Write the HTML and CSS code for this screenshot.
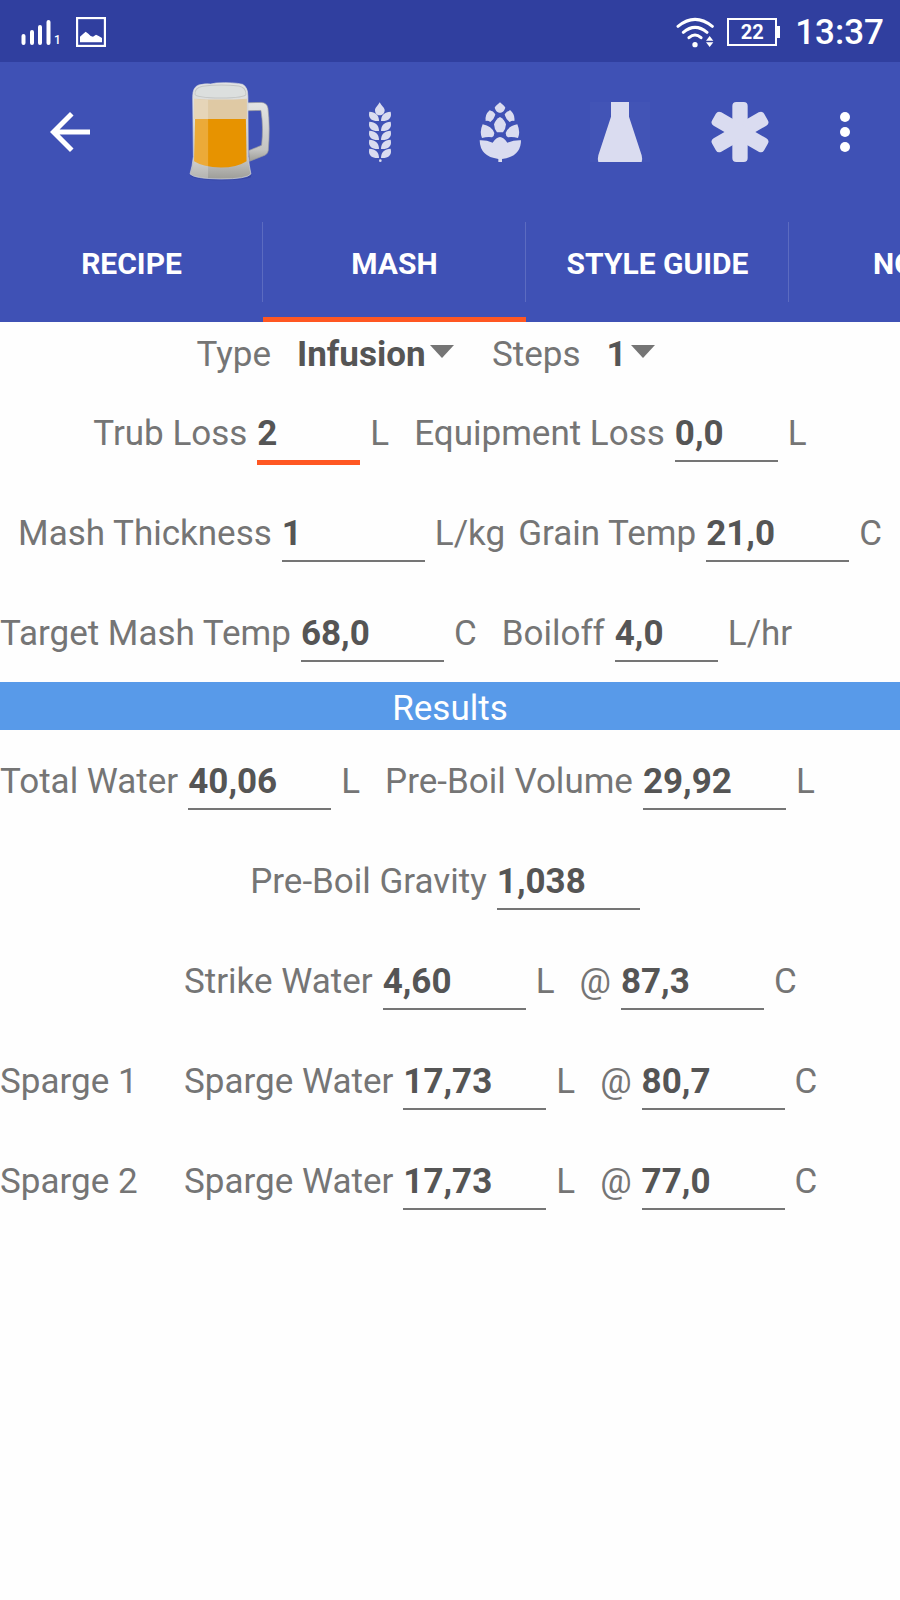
FILE: index.html
```html
<!DOCTYPE html>
<html lang="en">
<head>
    <meta charset="UTF-8">
    <meta name="viewport" content="width=device-width, initial-scale=1.0">
    <title>Mash</title>
    <link rel="stylesheet" href="styles.css">
</head>
<body>
    <div class="status-bar">
        <div class="status-group">
            <div class="signal">
                <svg width="30" height="25" viewBox="0 0 30 25" stroke="#fff" stroke-width="4" stroke-linecap="round">
                    <path d="M2.500 16v7M11 12v11M19 7v16M27.500 2v21"/>
                </svg>
                <span class="sim">1</span>
            </div>
            <svg width="30" height="30" viewBox="0 0 90 90">
                <rect x="3" y="3" width="84" height="84" fill="none" stroke="#fff" stroke-width="7"/>
                <path d="M12 76V59L22 50L29 44L37 50L44 57L51 59L60 53L68 57L78 63V76Z" fill="#fff"/>
            </svg>
        </div>
        <div class="status-group status-right">
            <svg width="39" height="31" viewBox="0 0 117 93" fill="none" stroke="#fff" stroke-width="9" stroke-linecap="round">
                <path d="M6 28Q57 -14 109 28M22 46Q57 16 93 46M39 62Q57 46 75 62"/>
                <circle cx="57" cy="83" r="8" fill="#fff" stroke="none"/>
                <path d="M101 57L112 71H90ZM101 90L112 76H90Z" fill="#fff" stroke="none"/>
            </svg>
            <div class="battery"><span>22</span></div>
            <span class="clock">13:37</span>
        </div>
    </div>

    <header class="app-bar">
        <button class="back-btn" aria-label="Back">
            <svg width="60" height="60" viewBox="0 0 24 24" fill="#fff"><path d="M20 11H7.830l5.590-5.590L12 4l-8 8 8 8 1.410-1.410L7.830 13H20z"/></svg>
        </button>
        <button class="mug-btn" aria-label="Brew">
            <svg width="87" height="102" viewBox="561 244 260 305">
                <defs>
                    <linearGradient id="glass" x1="0" y1="0" x2="0" y2="1">
                        <stop offset="0" stop-color="#e3e4e4"/>
                        <stop offset=".8" stop-color="#c4c4c2"/>
                        <stop offset="1" stop-color="#9d9d98"/>
                    </linearGradient>
                </defs>
                <path d="M572 524Q580 538 662 539Q744 538 753 524L752 532Q730 541 662 541Q590 540 572 529Z" fill="#2c3a8c" opacity=".5"/>
                <path d="M742 309L783 308Q800 309 803 325Q810 380 804 452Q803 462 794 466L748 484L746 452L784 436Q790 380 782 332L742 333Z" fill="url(#glass)" stroke="#9a9b9d" stroke-width="2"/>
                <path d="M578 290Q578 262 596 256Q615 251 632 253L648 250Q700 247 727 254Q743 262 743 290L744 470Q746 495 752 522Q740 537 662 537Q582 536 570 522Q577 500 580 470Z" fill="url(#glass)" stroke="#d5d6dd" stroke-width="2"/>
                <path d="M585 284Q583 265 607 260Q660 252 716 259Q738 264 737 284Q735 294 662 295Q588 294 585 284Z" fill="#dcdfde" stroke="#c3c5c4" stroke-width="3"/>
                <path d="M582 297Q660 302 740 297V358H582Z" fill="#dfc9a4"/>
                <path d="M585 358H737L739 484Q710 503 662 503Q610 502 582 484Z" fill="#e79300"/>
                <path d="M580 296Q600 300 624 300V534Q586 532 572 522Q580 500 582 470Z" fill="#fff" opacity=".22"/>
            </svg>
        </button>
        <nav class="actions">
            <button aria-label="Grains">
                <svg width="60" height="60" viewBox="0 0 180 180" fill="#dadcf0">
                    <defs>
                        <path id="grain" d="M-32 1C-14 2 -3 10 -3 29C-22 31 -34 22 -33 8Z"/>
                        <g id="pair"><use href="#grain"/><use href="#grain" transform="scale(-1 1)"/></g>
                    </defs>
                    <path d="M89 1C95 12 104 17 104 25C104 34 97 40 89 40C81 40 75 34 75 25C75 17 83 12 89 1Z"/>
                    <use href="#pair" x="90" y="28"/>
                    <use href="#pair" x="90" y="58"/>
                    <use href="#pair" x="90" y="85"/>
                    <use href="#pair" x="90" y="112"/>
                    <use href="#pair" x="90" y="139"/>
                    <circle cx="91" cy="176" r="4"/>
                </svg>
            </button>
            <button aria-label="Hops">
                <svg width="60" height="60" viewBox="0 0 180 180" fill="#dadcf0">
                    <path d="M90 1C97 7 103 11 106 17C104 24 100 29 96 31Q90 34 84 31C80 29 76 24 74 17C77 11 83 7 90 1Z"/>
                    <path id="hop-upper" d="M59 25Q70 27 76 37Q73 51 61 60Q54 55 47 57Q44 38 59 25Z"/>
                    <use href="#hop-upper" transform="matrix(-1 0 0 1 180 0)"/>
                    <path d="M90 45Q103 52 108 67Q107 82 99 91H81Q73 82 72 67Q77 52 90 45Z"/>
                    <path id="hop-lower" d="M38 67Q65 72 73 93Q73 102 66 106Q52 104 36 108Q28 90 38 67Z"/>
                    <use href="#hop-lower" transform="matrix(-1 0 0 1 180 0)"/>
                    <path d="M29 115Q49 114 68 122Q79 106 90 105Q101 106 112 122Q131 114 153 115Q153 164 96 171V180H85V171Q30 164 29 115Z"/>
                </svg>
            </button>
            <button aria-label="Yeast">
                <svg width="60" height="60" viewBox="0 0 180 180" fill="#dadcf0">
                    <rect width="180" height="180" fill="#fff" opacity=".02"/>
                    <path d="M63 0H117V44L155 160Q158 172 155 180H25Q22 172 25 160L63 44Z"/>
                </svg>
            </button>
            <button aria-label="Other ingredients">
                <svg width="60" height="60" viewBox="0 0 180 180" fill="#dadcf0">
                    <rect id="arm" x="67" y="0" width="46" height="180" rx="12"/>
                    <use href="#arm" transform="rotate(60 90 90)"/>
                    <use href="#arm" transform="rotate(120 90 90)"/>
                </svg>
            </button>
            <button class="menu-btn" aria-label="More options">
                <svg width="60" height="60" viewBox="0 0 60 60" fill="#fff">
                    <circle cx="30" cy="15" r="5"/><circle cx="30" cy="30" r="5"/><circle cx="30" cy="45" r="5"/>
                </svg>
            </button>
        </nav>
    </header>

    <nav class="tabs">
        <button class="tab">RECIPE</button>
        <button class="tab active">MASH</button>
        <button class="tab">STYLE GUIDE</button>
        <button class="tab">NOTES</button>
    </nav>

    <main>
        <form class="mash-form">
            <div class="type-row">
                <label for="mash-type">Type</label>
                <div class="spinner">
                    <select id="mash-type"><option>Infusion</option></select>
                    <svg width="24" height="14" viewBox="0 0 24 14" fill="#757575"><path d="M0 0H24L12 13Z"/></svg>
                </div>
                <label for="steps" class="steps-label">Steps</label>
                <div class="spinner">
                    <select id="steps"><option>1</option></select>
                    <svg width="24" height="14" viewBox="0 0 24 14" fill="#757575"><path d="M0 0H24L12 13Z"/></svg>
                </div>
            </div>

            <div class="row centered">
                <div class="field">
                    <label for="trub-loss">Trub Loss</label>
                    <input type="text" id="trub-loss" class="short current" value="2">
                    <span>L</span>
                </div>
                <div class="field">
                    <label for="equipment-loss">Equipment Loss</label>
                    <input type="text" id="equipment-loss" class="short" value="0,0">
                    <span>L</span>
                </div>
            </div>

            <div class="row centered tight">
                <div class="field">
                    <label for="thickness">Mash Thickness</label>
                    <input type="text" id="thickness" value="1">
                    <span>L/kg</span>
                </div>
                <div class="field">
                    <label for="grain-temp">Grain Temp</label>
                    <input type="text" id="grain-temp" value="21,0">
                    <span>C</span>
                </div>
            </div>

            <div class="row">
                <div class="field">
                    <label for="target-temp">Target Mash Temp</label>
                    <input type="text" id="target-temp" value="68,0">
                    <span>C</span>
                </div>
                <div class="field">
                    <label for="boiloff">Boiloff</label>
                    <input type="text" id="boiloff" class="short" value="4,0">
                    <span>L/hr</span>
                </div>
            </div>
        </form>

        <h2 class="results-title">Results</h2>

        <div class="results">
            <div class="row">
                <div class="field">
                    <label for="total-water">Total Water</label>
                    <input type="text" id="total-water" value="40,06">
                    <span>L</span>
                </div>
                <div class="field">
                    <label for="preboil-volume">Pre-Boil Volume</label>
                    <input type="text" id="preboil-volume" value="29,92">
                    <span>L</span>
                </div>
            </div>

            <div class="row centered">
                <div class="field">
                    <label for="preboil-gravity">Pre-Boil Gravity</label>
                    <input type="text" id="preboil-gravity" value="1,038">
                    <span></span>
                </div>
            </div>

            <div class="row">
                <span class="batch-name"></span>
                <div class="field">
                    <label for="strike-water">Strike Water</label>
                    <input type="text" id="strike-water" value="4,60">
                    <span>L</span>
                </div>
                <div class="field">
                    <label for="strike-temp">@</label>
                    <input type="text" id="strike-temp" value="87,3">
                    <span>C</span>
                </div>
            </div>

            <div class="row">
                <span class="batch-name">Sparge 1</span>
                <div class="field">
                    <label for="sparge1-water">Sparge Water</label>
                    <input type="text" id="sparge1-water" value="17,73">
                    <span>L</span>
                </div>
                <div class="field">
                    <label for="sparge1-temp">@</label>
                    <input type="text" id="sparge1-temp" value="80,7">
                    <span>C</span>
                </div>
            </div>

            <div class="row">
                <span class="batch-name">Sparge 2</span>
                <div class="field">
                    <label for="sparge2-water">Sparge Water</label>
                    <input type="text" id="sparge2-water" value="17,73">
                    <span>L</span>
                </div>
                <div class="field">
                    <label for="sparge2-temp">@</label>
                    <input type="text" id="sparge2-temp" value="77,0">
                    <span>C</span>
                </div>
            </div>
        </div>
    </main>
</body>
</html>
```
FILE: styles.css
```css
* {
    box-sizing: border-box;
}

body {
    margin: 0;
    background-color: #fefefe;
    color: #757575;
    font-family: Roboto, "Liberation Sans", sans-serif;
    font-size: 35px;
    line-height: 41px;
}

button {
    display: flex;
    align-items: center;
    justify-content: center;
    padding: 0;
    border: none;
    background: none;
    color: inherit;
    font: inherit;
    cursor: pointer;
}

/* Status bar */
.status-bar {
    display: flex;
    justify-content: space-between;
    height: 62px;
    padding: 2px 16px 0 21px;
    background-color: #303f9f;
    color: #fff;
}

.status-group {
    display: flex;
    align-items: center;
    gap: 15px;
}

.status-right {
    gap: 12px;
}

.signal {
    display: flex;
    align-items: flex-end;
    gap: 3px;
}

.sim {
    font-size: 12px;
    font-weight: 500;
    line-height: 10px;
}

.battery {
    display: flex;
    align-items: center;
    justify-content: center;
    position: relative;
    width: 50px;
    height: 28px;
    margin-right: 6px;
    border: 2px solid #fff;
    font-size: 20px;
    font-weight: 700;
}

.battery::after {
    content: "";
    position: absolute;
    top: 6px;
    right: -5px;
    width: 3px;
    height: 12px;
    background-color: #fff;
}

.clock {
    font-weight: 500;
}

/* Toolbar */
.app-bar {
    display: flex;
    height: 140px;
    padding-right: 10px;
    background-color: #3f51b5;
}

.back-btn {
    width: 140px;
}

.mug-btn {
    width: 100px;
    margin-left: 40px;
}

.actions {
    display: flex;
    margin-left: auto;
}

.actions button {
    width: 120px;
}

.actions .menu-btn {
    width: 90px;
}

/* Tabs */
.tabs {
    display: flex;
    height: 120px;
    overflow: hidden;
    background-color: #3f51b5;
    color: #fff;
}

.tab {
    position: relative;
    flex: 0 0 263px;
    padding-top: 2px;
    font-size: 30px;
    font-weight: 700;
}

.tab::after {
    content: "";
    position: absolute;
    top: 20px;
    right: 0;
    width: 1px;
    height: 80px;
    background-color: #5c6bc0;
}

.tab.active {
    box-shadow: inset 0 -5px #ff5722;
}

/* Mash settings */
.mash-form {
    padding: 12px 0 20px;
}

.type-row {
    display: flex;
    justify-content: center;
    gap: 26px;
    padding: 0 48px 38px 0;
}

.steps-label {
    margin-left: 12px;
}

.spinner {
    display: flex;
    gap: 4px;
}

.spinner svg {
    margin-top: 11px;
}

.spinner select {
    height: 41px;
    padding: 0;
    border: none;
    background: none;
    appearance: none;
    color: #555;
    font: inherit;
    font-weight: 700;
}

.row {
    display: flex;
    gap: 25px;
    height: 49px;
    margin-bottom: 51px;
}

.row:last-child {
    margin-bottom: 0;
}

.row.centered {
    justify-content: center;
}

.row.tight {
    gap: 13px;
}

.field {
    display: flex;
    align-items: flex-start;
    gap: 10px;
    white-space: nowrap;
}

.field input {
    width: 143px;
    height: 49px;
    padding: 0 0 6px;
    border: none;
    border-bottom: 2px solid #757575;
    border-radius: 0;
    outline: none;
    background: none;
    color: #555;
    font: inherit;
    font-weight: 700;
}

.field input.short {
    width: 103px;
}

.field input.current {
    height: 52px;
    border-bottom: 5px solid #ff5722;
}

/* Results */
.results-title {
    margin: 0;
    padding: 6px 0 1px;
    background-color: #589ae9;
    color: #fff;
    font-size: 35px;
    font-weight: 400;
    text-align: center;
}

.results {
    padding: 31px 0;
}

.batch-name {
    width: 159px;
}
```
